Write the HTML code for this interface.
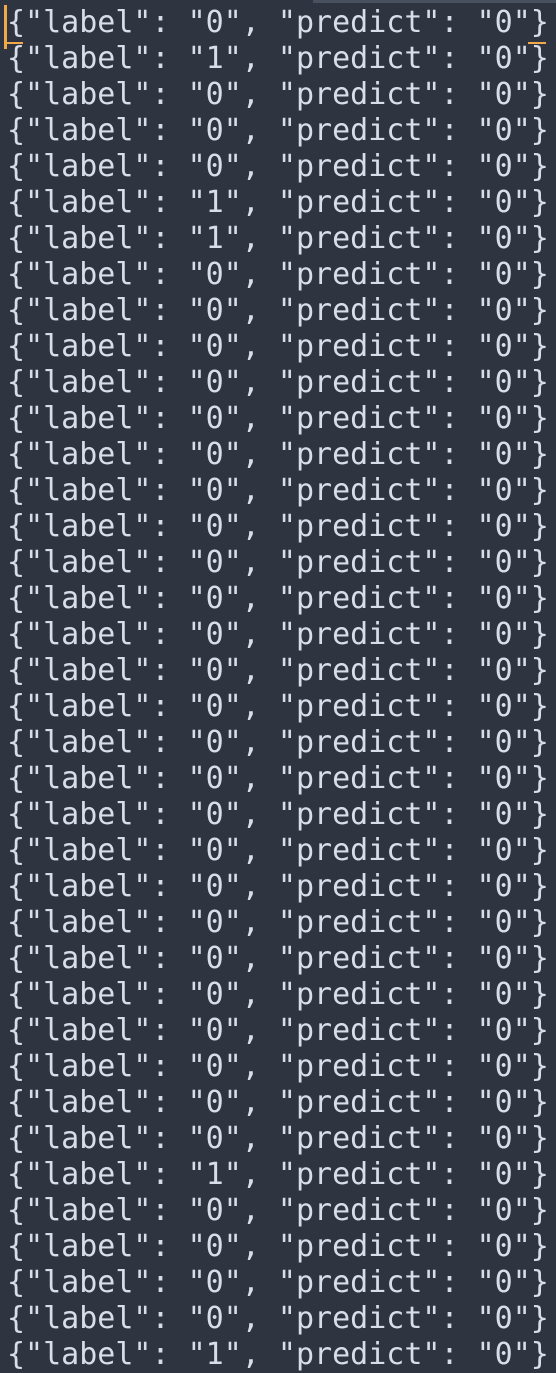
<!DOCTYPE html>
<html><head><style>
html,body{margin:0;padding:0;width:556px;height:1350px;overflow:hidden;background:#2f3540;}
pre{margin:0;position:absolute;left:7px;top:5px;font-family:"DejaVu Sans Mono","Liberation Mono",monospace;font-size:30px;line-height:36px;color:#d8dee9;}
.bar{position:absolute;left:313px;top:0;width:243px;height:3px;background:#4a515e;}
.cur{position:absolute;left:4px;top:5px;width:3px;height:44px;background:#f0a848;}
.u1{position:absolute;left:4px;top:42px;width:19px;height:2px;background:#f0a848;}
.u2{position:absolute;left:528px;top:42px;width:18px;height:2px;background:#f0a848;}
</style></head><body>
<div class="bar"></div>
<pre>{"label": "0", "predict": "0"}
{"label": "1", "predict": "0"}
{"label": "0", "predict": "0"}
{"label": "0", "predict": "0"}
{"label": "0", "predict": "0"}
{"label": "1", "predict": "0"}
{"label": "1", "predict": "0"}
{"label": "0", "predict": "0"}
{"label": "0", "predict": "0"}
{"label": "0", "predict": "0"}
{"label": "0", "predict": "0"}
{"label": "0", "predict": "0"}
{"label": "0", "predict": "0"}
{"label": "0", "predict": "0"}
{"label": "0", "predict": "0"}
{"label": "0", "predict": "0"}
{"label": "0", "predict": "0"}
{"label": "0", "predict": "0"}
{"label": "0", "predict": "0"}
{"label": "0", "predict": "0"}
{"label": "0", "predict": "0"}
{"label": "0", "predict": "0"}
{"label": "0", "predict": "0"}
{"label": "0", "predict": "0"}
{"label": "0", "predict": "0"}
{"label": "0", "predict": "0"}
{"label": "0", "predict": "0"}
{"label": "0", "predict": "0"}
{"label": "0", "predict": "0"}
{"label": "0", "predict": "0"}
{"label": "0", "predict": "0"}
{"label": "0", "predict": "0"}
{"label": "1", "predict": "0"}
{"label": "0", "predict": "0"}
{"label": "0", "predict": "0"}
{"label": "0", "predict": "0"}
{"label": "0", "predict": "0"}
{"label": "1", "predict": "0"}</pre>
<div class="cur"></div><div class="u1"></div><div class="u2"></div>
</body></html>
